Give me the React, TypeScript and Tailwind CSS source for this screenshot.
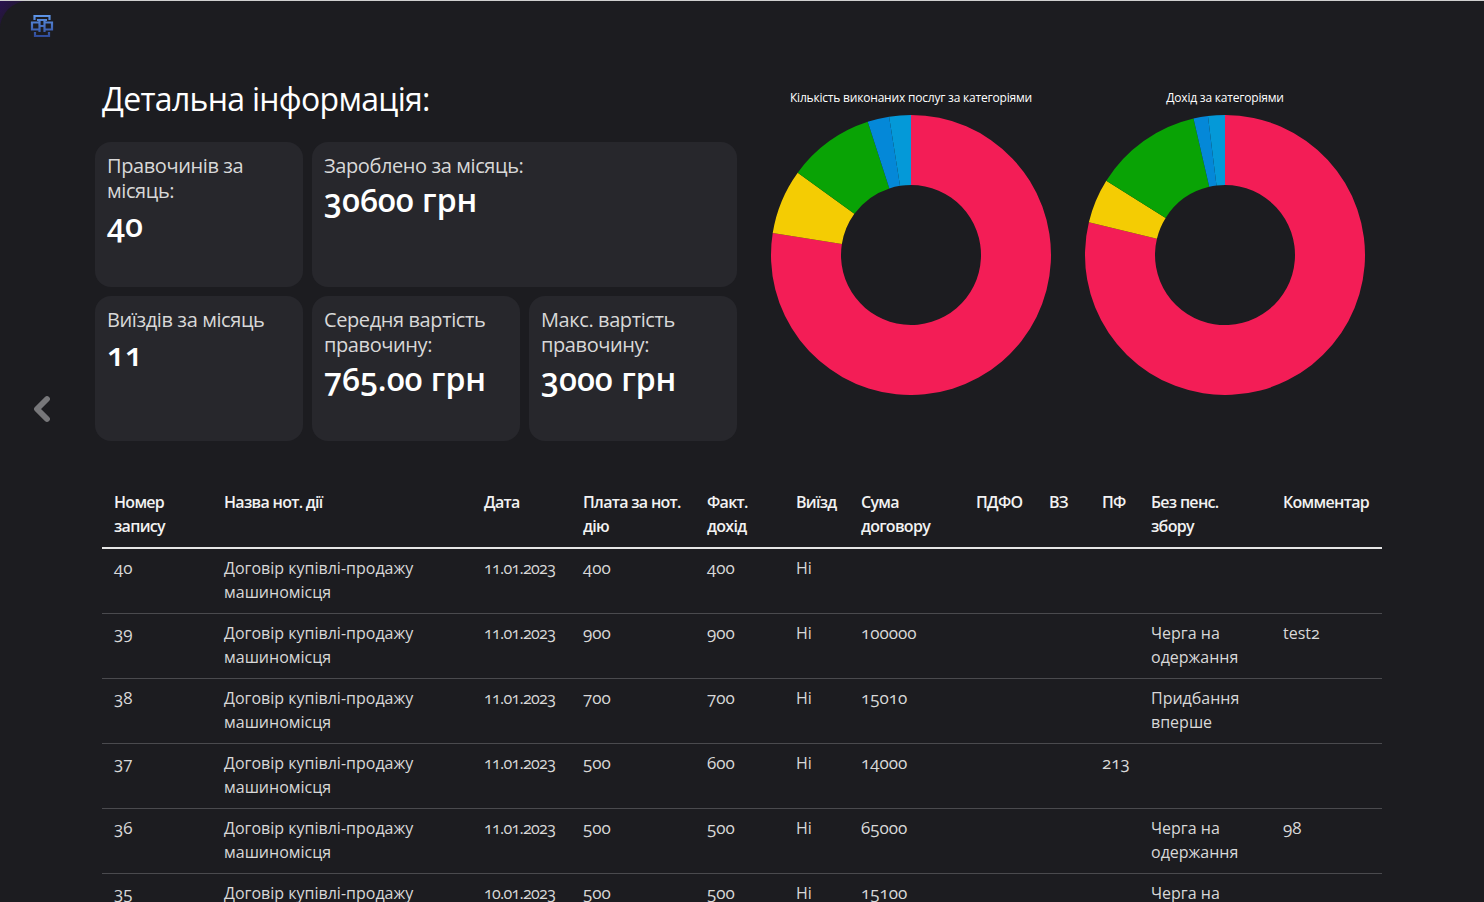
import { ChevronLeft } from 'lucide-react'

const FONT = "font-['Open_Sans',sans-serif]"

// кут у градусах, відлік від верхньої точки за годинниковою стрілкою
function sector(cx: number, from: number, to: number) {
    const pt = (a: number, r: number) => {
        const t = ((a - 90) * Math.PI) / 180
        return `${cx + r * Math.cos(t)} ${140 + r * Math.sin(t)}`
    }
    const large = to - from > 180 ? 1 : 0
    return `M${pt(from, 140)} A140 140 0 ${large} 1 ${pt(to, 140)} L${pt(to, 70)} A70 70 0 ${large} 0 ${pt(from, 70)} Z`
}

const colors = ['#f31d56', '#f4cc03', '#09a305', '#0488d8', '#0499d8']

function Donut({ title, stops }: { title: string; stops: number[] }) {
    return (
        <div className="flex w-[280px] flex-col items-center">
            <p className="h-[18px] whitespace-nowrap text-[12px] leading-[18px] tracking-[-0.2px] text-white">{title}</p>
            <svg width="280" height="280" viewBox="0 0 280 280" className="mt-[8px]">
                {colors.map((c, i) => (
                    <path key={c} d={sector(140, stops[i], stops[i + 1])} fill={c} />
                ))}
            </svg>
        </div>
    )
}

function Card({ label, value, className = '' }: { label: string; value: string; className?: string }) {
    return (
        <div className={`h-[145px] rounded-[16px] bg-[#27272c] px-[12px] pt-[11px] ${className}`}>
            <p className="text-[20px] leading-[25px] tracking-[-0.4px] text-[#d8d8d8]">{label}</p>
            <p className="mt-[2px] text-[32px] font-semibold leading-[40px] text-white [font-feature-settings:'onum']">{value}</p>
        </div>
    )
}

const headers = ['Номер\nзапису', 'Назва нот. дії', 'Дата', 'Плата за нот.\nдію', 'Факт.\nдохід', 'Виїзд', 'Сума\nдоговору', 'ПДФО', 'ВЗ', 'ПФ', 'Без пенс.\nзбору', 'Комментар']
const widths = ['w-[110px]', 'w-[260px]', 'w-[99px]', 'w-[124px]', 'w-[89px]', 'w-[65px]', 'w-[115px]', 'w-[73px]', 'w-[53px]', 'w-[49px]', 'w-[132px]', 'w-[111px]']

const dogovir = 'Договір купівлі-продажу машиномісця'
const rows = [
    ['40', dogovir, '11.01.2023', '400', '400', 'Ні', '', '', '', '', '', ''],
    ['39', dogovir, '11.01.2023', '900', '900', 'Ні', '100000', '', '', '', 'Черга на одержання', 'test2'],
    ['38', dogovir, '11.01.2023', '700', '700', 'Ні', '15010', '', '', '', 'Придбання вперше', ''],
    ['37', dogovir, '11.01.2023', '500', '600', 'Ні', '14000', '', '', '213', '', ''],
    ['36', dogovir, '11.01.2023', '500', '500', 'Ні', '65000', '', '', '', 'Черга на одержання', '98'],
    ['35', dogovir, '10.01.2023', '500', '500', 'Ні', '15100', '', '', '', 'Черга на одержання', ''],
]

function cellText(c: string) {
    if (/^\d+$/.test(c)) return 'text-[17px]'
    if (c.includes('.01.')) return 'tracking-[-0.7px]'
    return ''
}

function Logo() {
    return (
        <svg width="24" height="24" viewBox="0 0 24 24" fill="none" stroke="url(#logoFill)" strokeWidth="2.2">
            <defs>
                <linearGradient id="logoFill" gradientUnits="userSpaceOnUse" x1="0" y1="1" x2="0" y2="23">
                    <stop offset="0" stopColor="#5f97ea" />
                    <stop offset="1" stopColor="#2f4a98" />
                </linearGradient>
            </defs>
            <path d="M4.5 6V2h15v4M5 18v4h14v-4" />
            <path d="M7 6h10M9.5 6v12M14.5 6v12M9 8.5H2v7h7M15 8.5h7v7h-7M9 12h6" />
        </svg>
    )
}

export default function App() {
    return (
        <div className="border-t border-[#cfcfcf] bg-[linear-gradient(135deg,#2a1250_0px,#1c1c20_30px)]">
            <div className={`flex h-[901px] overflow-hidden rounded-tl-[28px] bg-[#1c1c20] ${FONT}`}>
                <aside className="flex w-[84px] shrink-0 flex-col items-center pt-[13px]">
                    <Logo />
                    <ChevronLeft size={40} strokeWidth={3.5} className="mt-[351px] text-[#77777a]" />
                </aside>

                <main className="w-[1300px]">
                    <div className="flex pl-[11px]">
                        <div className="w-[642px] shrink-0">
                            <h1 className="mb-[22px] ml-[7px] mt-[77px] text-[32px] font-medium leading-[42px] tracking-[-0.7px] text-white">Детальна інформація:</h1>
                            <div className="grid grid-cols-[208px_208px_208px] gap-[9px]">
                                <Card label="Правочинів за місяць:" value="40" />
                                <Card label="Зароблено за місяць:" value="30600 грн" className="col-span-2" />
                                <Card label="Виїздів за місяць" value="11" />
                                <Card label="Середня вартість правочину:" value="765.00 грн" />
                                <Card label="Макс. вартість правочину:" value="3000 грн" />
                            </div>
                        </div>
                        <div className="ml-[34px] flex gap-[34px] pt-[88px]">
                            <Donut title="Кількість виконаних послуг за категоріями" stops={[0, 279, 306, 342, 351, 360]} />
                            <Donut title="Дохід за категоріями" stops={[0, 283.5, 302, 347, 353, 360]} />
                        </div>
                    </div>

                    <table className="ml-[18px] mt-[48px] w-[1280px] table-fixed border-collapse text-left text-[16px] leading-[24px]">
                        <thead>
                            <tr className="border-b-2 border-[#e6e6e6]">
                                {headers.map((h, i) => (
                                    <th key={h} className={`${widths[i]} whitespace-pre px-[12px] pb-[9px] pt-[1px] align-top font-semibold tracking-[-0.7px] text-[#f2f2f2]`}>{h}</th>
                                ))}
                            </tr>
                        </thead>
                        <tbody>
                            {rows.map(r => (
                                <tr key={r[0]} className="border-b border-[#4a4a4e]">
                                    {r.map((c, i) => (
                                        <td key={i} className={`px-[12px] pb-[9px] pt-[7px] align-top text-[#d8d8d8] [font-feature-settings:'onum'] ${cellText(c)}`}>{c}</td>
                                    ))}
                                </tr>
                            ))}
                        </tbody>
                    </table>
                </main>
            </div>
        </div>
    )
}
